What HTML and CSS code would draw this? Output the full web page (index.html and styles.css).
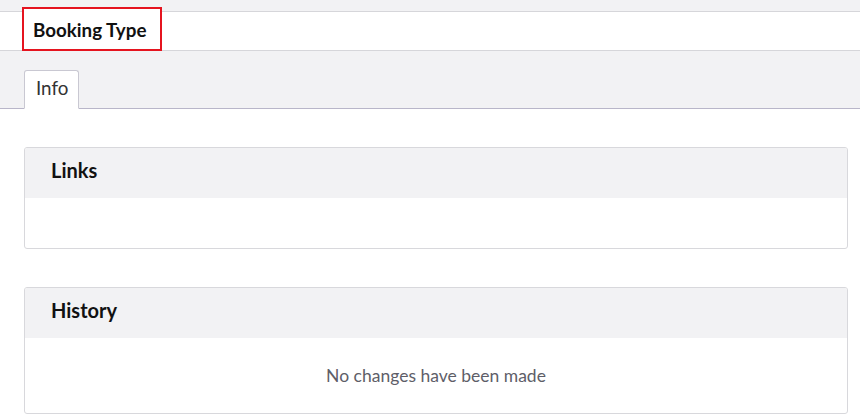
FILE: index.html
```html
<!DOCTYPE html>
<html>
<head>
<meta charset="utf-8">
<link rel="stylesheet" href="styles.css">
</head>
<body>
<div class="top">
  <div class="header">
    <div class="title">Booking Type</div>
  </div>
  <div class="tabs">
    <div class="tab">Info</div>
  </div>
</div>
<div class="content">
  <section class="panel">
    <div class="panel-head">Links</div>
    <div class="panel-body links-body"></div>
  </section>
  <section class="panel">
    <div class="panel-head">History</div>
    <div class="panel-body history-body">No changes have been made</div>
  </section>
</div>
</body>
</html>
```
FILE: styles.css
```css
html, body {
  margin: 0;
  padding: 0;
  background: #ffffff;
  font-family: Lato, "Open Sans", sans-serif;
  color: #111;
}
.top {
  background: #f2f2f4;
  padding-top: 11px;
}
.header {
  background: #ffffff;
  border-top: 1px solid #d6d6da;
  border-bottom: 1px solid #d6d6da;
  height: 38px;
  display: flex;
  align-items: flex-start;
  padding-left: 22px;
}
.title {
  box-sizing: border-box;
  margin-top: -5px;
  height: 44px;
  width: 140px;
  border: 2px solid #e5141f;
  display: flex;
  align-items: center;
  padding-left: 9px;
  font-size: 18.8px;
  font-weight: 700;
  color: #111;
  background: #fff;
}
.tabs {
  display: flex;
  padding: 19px 0 0 24px;
  border-bottom: 1px solid #b9b6c9;
}
.tab {
  background: #fff;
  border: 1px solid #c9c8d2;
  border-bottom: 1px solid #fff;
  border-radius: 3px 3px 0 0;
  margin-bottom: -1px;
  padding: 6px 10px 9px 11px;
  font-size: 18.8px;
  line-height: 22px;
  color: #333;
}
.content {
  padding: 38px 12px 0 24px;
  display: flex;
  flex-direction: column;
  gap: 38px;
}
.panel {
  border: 1px solid #d8d8dc;
  border-radius: 3px;
  overflow: hidden;
}
.panel-head {
  background: #f2f2f4;
  height: 50px;
  box-sizing: border-box;
  padding: 10px 26px 0;
  font-size: 20px;
  line-height: 24px;
  font-weight: 700;
  color: #111;
}
.links-body {
  height: 50px;
}
.history-body {
  height: 75px;
  display: flex;
  align-items: center;
  justify-content: center;
  font-size: 17.5px;
  color: #5e5e68;
}
```
